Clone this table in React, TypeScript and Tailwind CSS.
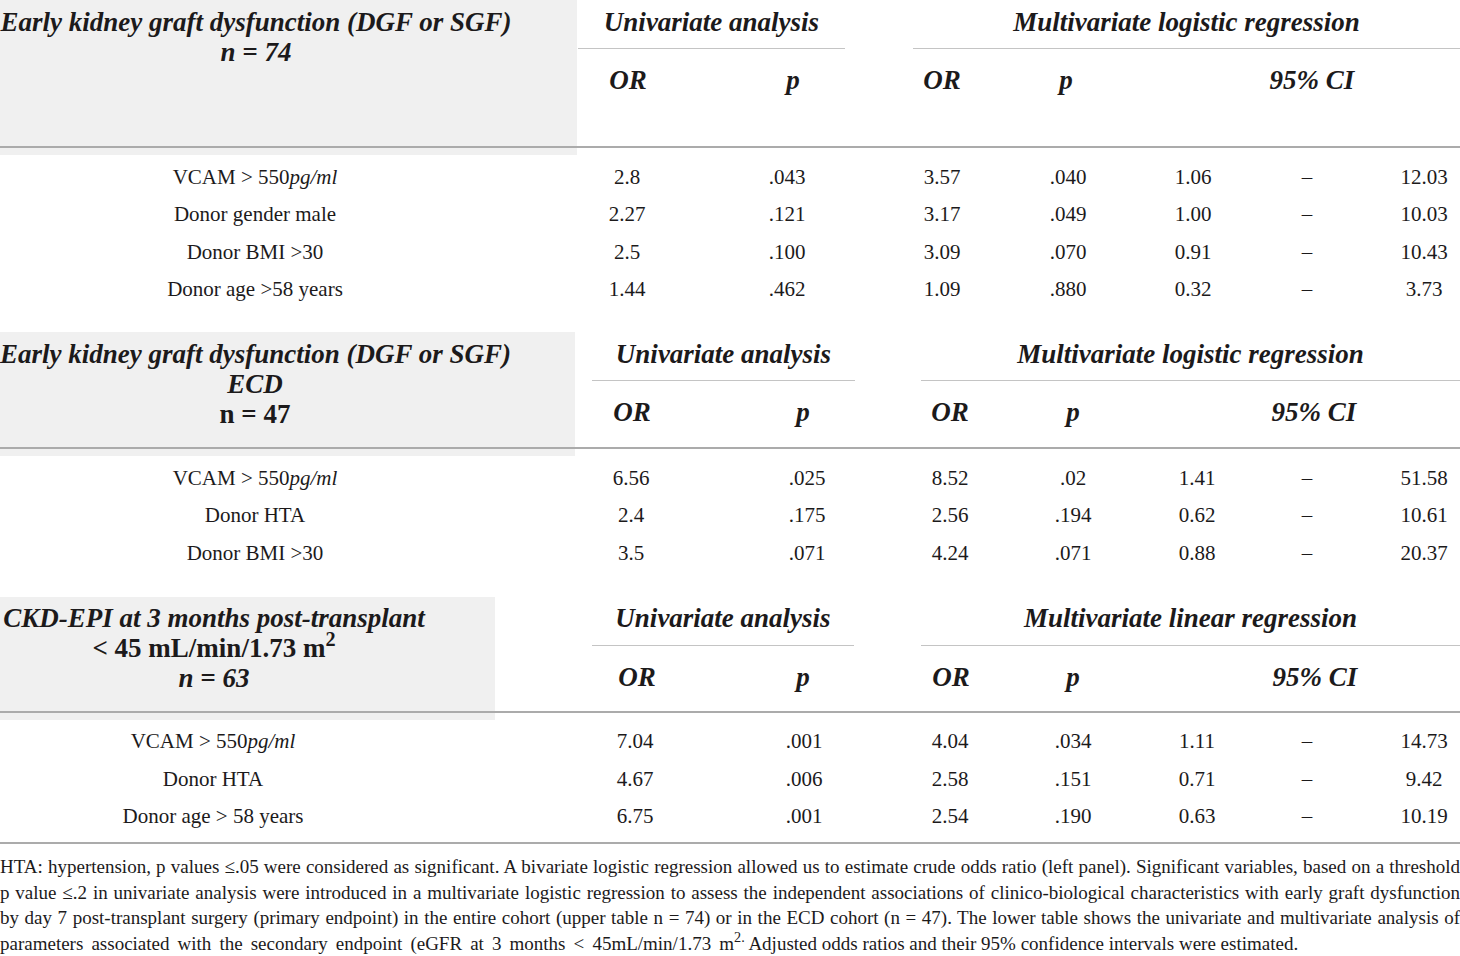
import React from "react";

type Row = [React.ReactNode, string, string, string, string, string, string, string];

interface TableProps {
  headH: string;
  grayW: string;
  titleW: string;
  titlePt: string;
  title: React.ReactNode;
  univCls: string;
  multiCls: string;
  multiLabel: string;
  sub: string[];
  data: string[];
  rows: Row[];
}

const HEAD = "font-bold italic text-[27px] leading-[30px] text-[#1c1a1b]";

function Table(p: TableProps) {
  return (
    <div>
      <div className={`flex ${p.headH} border-b-2 border-[#ababab]`}>
        <div className={`${p.grayW} shrink-0 bg-[#f0f0f0]`}>
          <div className={`${p.titleW} ${p.titlePt} text-center ${HEAD}`}>{p.title}</div>
        </div>
        <div className="flex flex-1 flex-col">
          <div className={`flex h-[49px] ${p.titlePt}`}>
            <div className={`${p.univCls} flex justify-center whitespace-nowrap border-b border-[#c4c4c4] ${HEAD}`}>
              Univariate analysis
            </div>
            <div className={`${p.multiCls} flex justify-center whitespace-nowrap border-b border-[#c4c4c4] ${HEAD}`}>
              {p.multiLabel}
            </div>
          </div>
          <div className={`mt-[16px] flex ${HEAD}`}>
            <div className={`${p.sub[0]} flex justify-center whitespace-nowrap`}>OR</div>
            <div className={`${p.sub[1]} flex justify-center whitespace-nowrap`}>p</div>
            <div className={`${p.sub[2]} flex justify-center whitespace-nowrap`}>OR</div>
            <div className={`${p.sub[3]} flex justify-center whitespace-nowrap`}>p</div>
            <div className={`${p.sub[4]} flex justify-center whitespace-nowrap`}>95% CI</div>
          </div>
        </div>
      </div>
      <div className={`${p.grayW} h-[7px] bg-[#f0f0f0]`} />
      <div className="pt-[3px]">
        {p.rows.map((r, i) => (
          <div key={i} className="flex h-[37.5px] items-center text-[21px] leading-[24px] text-[#1c1a1b]">
            {r.map((c, j) => (
              <div key={j} className={`${p.data[j]} flex shrink-0 justify-center whitespace-nowrap`}>
                {c}
              </div>
            ))}
          </div>
        ))}
      </div>
    </div>
  );
}

const vcam = (
  <span>
    VCAM &gt; 550<i>pg/ml</i>
  </span>
);

export default function App() {
  return (
    <div className="h-[956px] w-[1460px] overflow-hidden bg-white font-['Liberation_Serif',serif] text-[#1c1a1b]">
      <Table
        headH="h-[148px]"
        grayW="w-[577px]"
        titleW="w-[512px]"
        titlePt="pt-[7px]"
        title={
          <>
            <div className="whitespace-nowrap">Early kidney graft dysfunction (DGF or SGF)</div>
            <div>n = 74</div>
          </>
        }
        univCls="ml-[1px] w-[267px]"
        multiCls="ml-[68px] w-[547px]"
        multiLabel="Multivariate logistic regression"
        sub={["ml-[11px] w-[80px]", "ml-[85px] w-[80px]", "ml-[69px] w-[80px]", "ml-[44px] w-[80px]", "ml-[146px] w-[120px]"]}
        data={["w-[510px]", "ml-[77px] w-[80px]", "ml-[80px] w-[80px]", "ml-[75px] w-[80px]", "ml-[46px] w-[80px]", "ml-[45px] w-[80px]", "ml-[34px] w-[80px]", "ml-[41px] w-[72px]"]}
        rows={[
          [vcam, "2.8", ".043", "3.57", ".040", "1.06", "–", "12.03"],
          ["Donor gender male", "2.27", ".121", "3.17", ".049", "1.00", "–", "10.03"],
          ["Donor BMI >30", "2.5", ".100", "3.09", ".070", "0.91", "–", "10.43"],
          ["Donor age >58 years", "1.44", ".462", "1.09", ".880", "0.32", "–", "3.73"],
        ]}
      />
      <div className="h-[24px]" />
      <Table
        headH="h-[117px]"
        grayW="w-[575px]"
        titleW="w-[510px]"
        titlePt="pt-[7px]"
        title={
          <>
            <div className="whitespace-nowrap">Early kidney graft dysfunction (DGF or SGF)</div>
            <div>ECD</div>
            <div className="not-italic">n = 47</div>
          </>
        }
        univCls="ml-[17px] w-[263px]"
        multiCls="ml-[66px] w-[539px]"
        multiLabel="Multivariate logistic regression"
        sub={["ml-[17px] w-[80px]", "ml-[91px] w-[80px]", "ml-[67px] w-[80px]", "ml-[43px] w-[80px]", "ml-[141px] w-[120px]"]}
        data={["w-[510px]", "ml-[81px] w-[80px]", "ml-[96px] w-[80px]", "ml-[63px] w-[80px]", "ml-[43px] w-[80px]", "ml-[44px] w-[80px]", "ml-[30px] w-[80px]", "ml-[41px] w-[72px]"]}
        rows={[
          [vcam, "6.56", ".025", "8.52", ".02", "1.41", "–", "51.58"],
          ["Donor HTA", "2.4", ".175", "2.56", ".194", "0.62", "–", "10.61"],
          ["Donor BMI >30", "3.5", ".071", "4.24", ".071", "0.88", "–", "20.37"],
        ]}
      />
      <div className="h-[25px]" />
      <Table
        headH="h-[116px]"
        grayW="w-[495px]"
        titleW="w-[428px]"
        titlePt="pt-[6px]"
        title={
          <>
            <div className="whitespace-nowrap">CKD-EPI at 3 months post-transplant</div>
            <div className="not-italic whitespace-nowrap">
              &lt; 45 mL/min/1.73 m<sup>2</sup>
            </div>
            <div>n = 63</div>
          </>
        }
        univCls="ml-[97px] w-[262px]"
        multiCls="ml-[67px] w-[539px]"
        multiLabel="Multivariate linear regression"
        sub={["ml-[102px] w-[80px]", "ml-[86px] w-[80px]", "ml-[68px] w-[80px]", "ml-[42px] w-[80px]", "ml-[142px] w-[120px]"]}
        data={["w-[426px]", "ml-[169px] w-[80px]", "ml-[89px] w-[80px]", "ml-[66px] w-[80px]", "ml-[43px] w-[80px]", "ml-[44px] w-[80px]", "ml-[30px] w-[80px]", "ml-[41px] w-[72px]"]}
        rows={[
          [vcam, "7.04", ".001", "4.04", ".034", "1.11", "–", "14.73"],
          ["Donor HTA", "4.67", ".006", "2.58", ".151", "0.71", "–", "9.42"],
          ["Donor age > 58 years", "6.75", ".001", "2.54", ".190", "0.63", "–", "10.19"],
        ]}
      />
      <div className="mt-[7px] h-[2px] bg-[#ababab]" />
      <div className="mt-[10px] text-[19px] leading-[25.5px] text-[#1c1a1b]">
        <div className="whitespace-nowrap text-justify [text-align-last:justify]">
          HTA: hypertension, p values ≤.05 were considered as significant. A bivariate logistic regression allowed us to estimate crude odds ratio (left panel). Significant variables, based on a threshold
        </div>
        <div className="text-justify [text-align-last:justify]">
          p value ≤.2 in univariate analysis were introduced in a multivariate logistic regression to assess the independent associations of clinico-biological characteristics with early graft dysfunction
        </div>
        <div className="text-justify [text-align-last:justify]">
          by day 7 post-transplant surgery (primary endpoint) in the entire cohort (upper table n = 74) or in the ECD cohort (n = 47). The lower table shows the univariate and multivariate analysis of
        </div>
        <div className="flex">
          <span className="w-[734px] shrink-0 text-justify [text-align-last:justify]">
            parameters associated with the secondary endpoint (eGFR at 3 months &lt; 45mL/min/1.73 m
          </span>
          <span className="whitespace-nowrap">
            <sup>2.</sup> Adjusted odds ratios and their 95% confidence intervals were estimated.
          </span>
        </div>
      </div>
    </div>
  );
}
